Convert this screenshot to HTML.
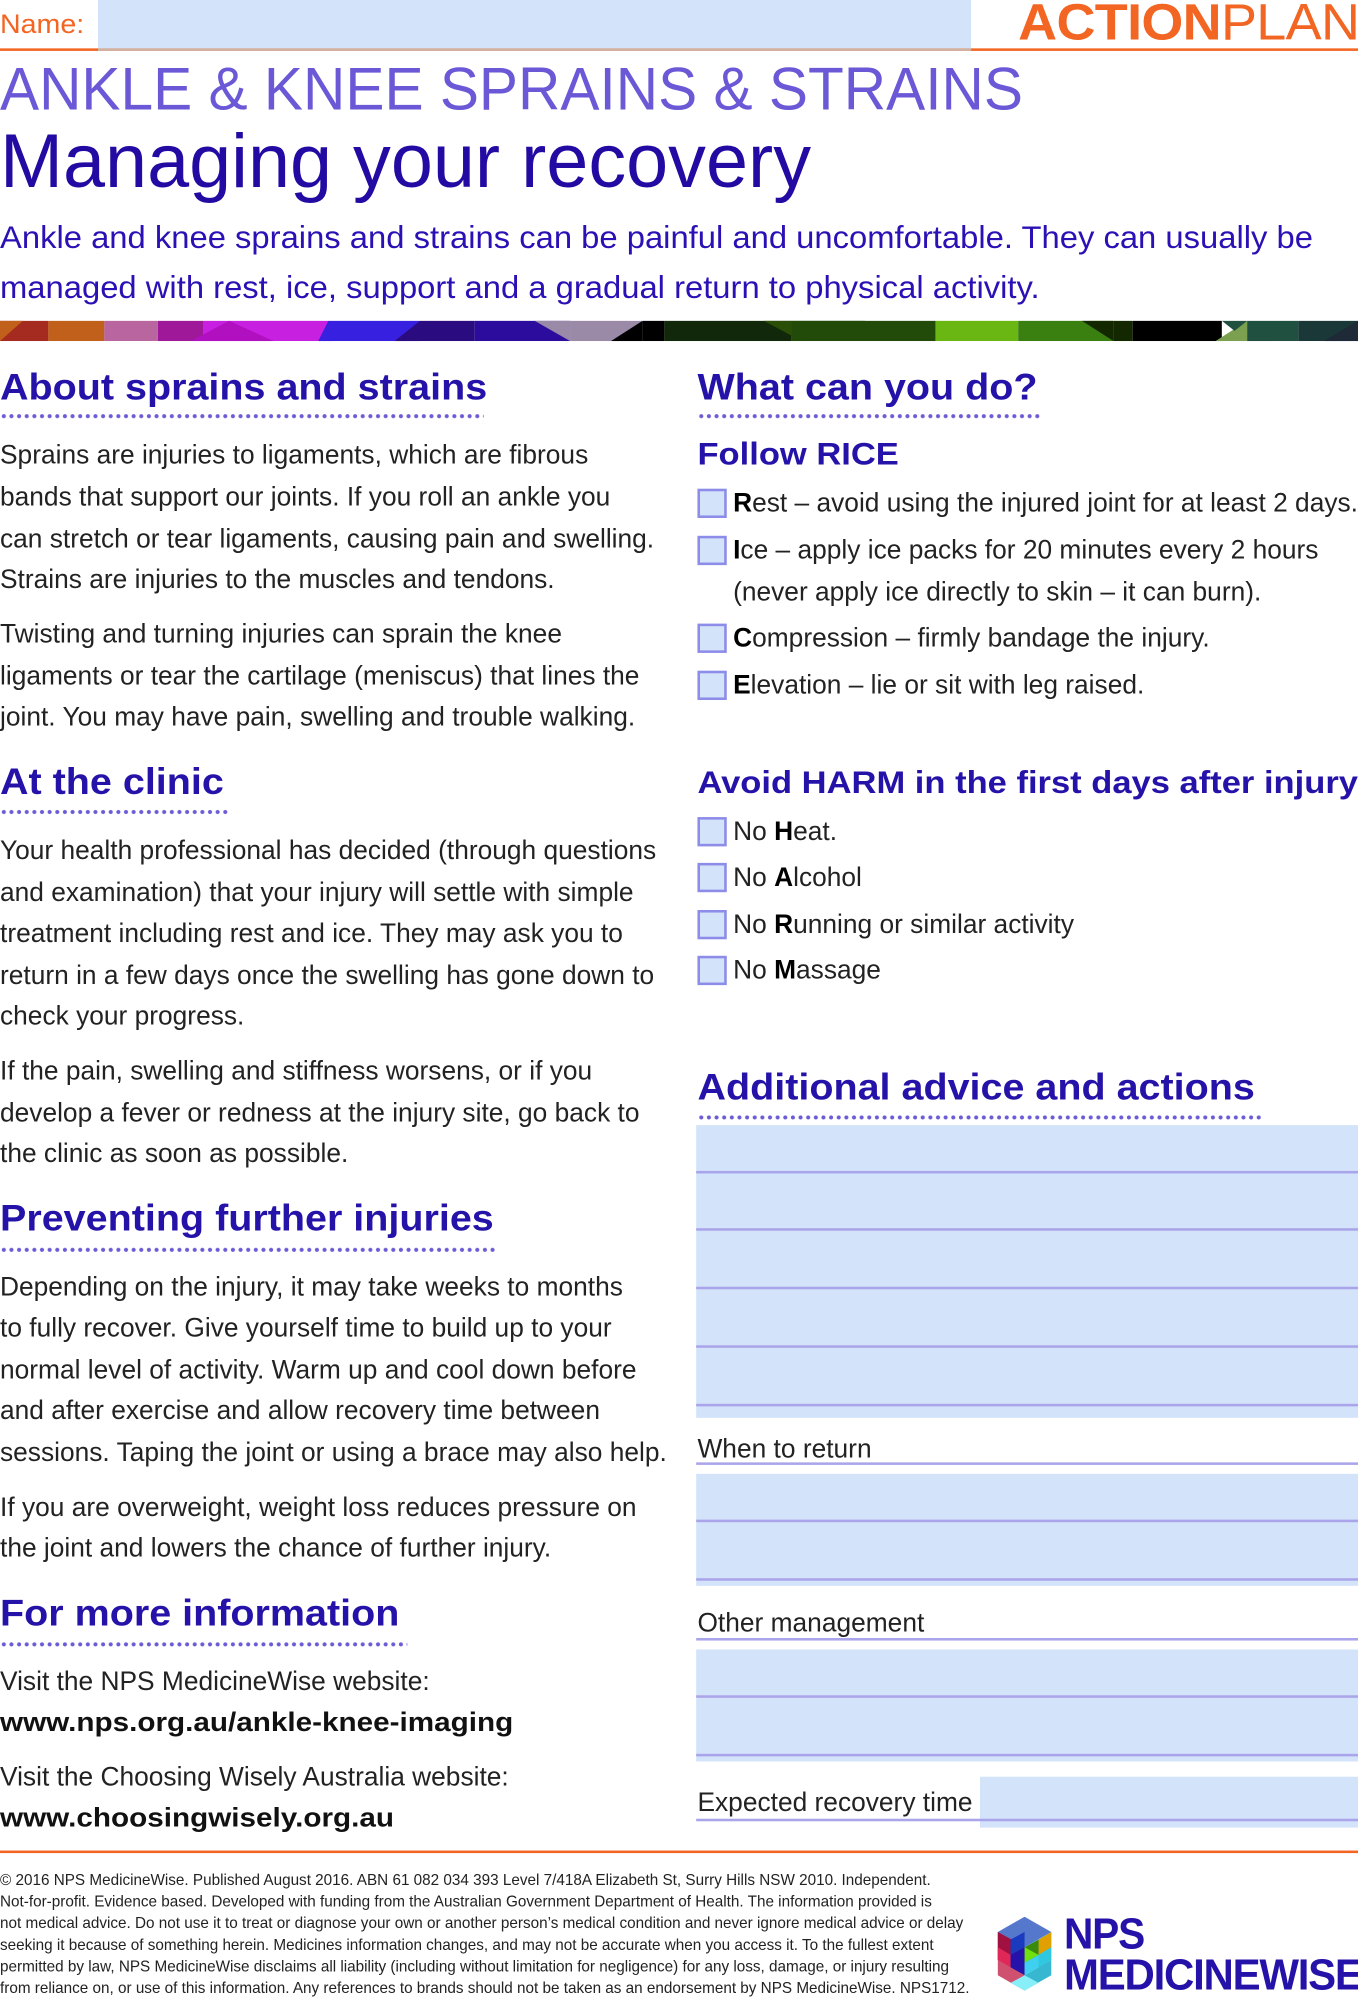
<!DOCTYPE html>
<html><head><meta charset="utf-8">
<style>
html,body{margin:0;padding:0;background:#fff;}
body{width:1358px;height:1996px;overflow:hidden;position:relative;}
#pg{position:absolute;left:0;top:0;width:1067px;height:1568px;transform:scale(1.27273);transform-origin:0 0;font-family:"Liberation Sans",Arial,sans-serif;}
.a{position:absolute;white-space:nowrap;}
.b{font-size:21px;line-height:33px;height:33px;color:#222;transform:scaleX(0.985);transform-origin:0 50%;}
.h{font-size:29px;font-weight:bold;color:#2512a8;line-height:34px;transform:scaleX(1.07);transform-origin:0 50%;}
.h2{font-size:25px;font-weight:bold;color:#2512a8;line-height:30px;transform:scaleX(1.085);transform-origin:0 50%;}
.dot{position:absolute;height:4px;background:radial-gradient(circle,#6b5bd6 1.4px,transparent 1.8px) 0 0/6px 4px repeat-x;}
.cb{position:absolute;left:548px;width:19px;height:19px;background:#d3e3fa;border:2px solid #8d8ce8;}
.fill{position:absolute;left:547px;width:520px;background:#d3e3fa;}
.ln{position:absolute;left:547px;width:520px;height:2px;background:#aaa4ea;}
.f{font-size:12px;line-height:17px;color:#222;}
b{color:#000;}
</style></head><body><div id="pg">
<div class="a" style="left:0;top:8px;font-size:21px;color:#f26522;line-height:24px;transform:scaleX(1.07);transform-origin:0 50%;">Name:</div>
<div style="position:absolute;left:77px;top:0;width:686px;height:38px;background:#d3e3fa;"></div>
<div style="position:absolute;left:0;top:38px;width:1067px;height:2px;background:#f26522;"></div>
<div style="position:absolute;left:77px;top:38px;width:686px;height:2px;background:#cfb3a6;"></div>
<div class="a" style="left:800px;top:-2px;font-size:40px;line-height:40px;color:#f26522;transform:scaleX(1.06);transform-origin:0 50%;letter-spacing:-0.5px;"><span style="font-weight:bold">ACTION</span>PLAN</div>

<div class="a" style="left:0;top:45px;font-size:47px;line-height:50px;color:#6a58d6;transform:scaleX(0.98);transform-origin:0 50%;">ANKLE &amp; KNEE SPRAINS &amp; STRAINS</div>
<div class="a" style="left:0;top:92px;font-size:60px;line-height:70px;color:#220aa2;transform:scaleX(0.99);transform-origin:0 50%;">Managing your recovery</div>
<div class="a" style="left:0;top:168px;font-size:25px;line-height:39px;color:#2a10b5;transform:scaleX(1.03);transform-origin:0 0;">Ankle and knee sprains and strains can be painful and uncomfortable. They can usually be<br>managed with rest, ice, support and a gradual return to physical activity.</div>

<svg style="position:absolute;left:0;top:252px" width="1067" height="16" viewBox="0 0 1067 16" preserveAspectRatio="none">
<rect x="0" y="0" width="38" height="16" fill="#a52a20"/><polygon points="0,16 0,0 18,0" fill="#c0601a"/>
<rect x="38" y="0" width="44" height="16" fill="#c0601a"/>
<rect x="82" y="0" width="42" height="16" fill="#b865a0"/>
<rect x="124" y="0" width="36" height="16" fill="#a0189a"/>
<rect x="160" y="0" width="98" height="16" fill="#c820e0"/><polygon points="150,16 180,0 215,16" fill="#b010c0"/>
<rect x="258" y="0" width="72" height="16" fill="#3820e0"/><polygon points="250,16 258,0 262,16" fill="#3820e0"/>
<rect x="330" y="0" width="43" height="16" fill="#2a0c80"/><polygon points="310,16 330,0 330,16" fill="#2a0c80"/>
<rect x="373" y="0" width="75" height="16" fill="#2c0c9c"/><polygon points="420,0 448,16 448,0" fill="#9a8aa8"/>
<rect x="448" y="0" width="57" height="16" fill="#9a8aa8"/><polygon points="480,16 505,0 505,16" fill="#000"/>
<rect x="505" y="0" width="17" height="16" fill="#000"/>
<rect x="522" y="0" width="100" height="16" fill="#12280a"/><polygon points="600,0 680,0 630,16" fill="#2a5008"/>
<rect x="622" y="0" width="113" height="16" fill="#224a08"/>
<rect x="735" y="0" width="65" height="16" fill="#6ab612"/>
<rect x="800" y="0" width="75" height="16" fill="#3a8010"/><polygon points="850,0 875,0 875,16" fill="#142800"/>
<rect x="875" y="0" width="15" height="16" fill="#142800"/>
<rect x="890" y="0" width="70" height="16" fill="#000"/><polygon points="955,16 980,0 1000,16" fill="#7aa050"/>
<rect x="980" y="0" width="40" height="16" fill="#1f5040"/><polygon points="960,0 980,0 970,8" fill="#1f5040"/>
<rect x="1020" y="0" width="47" height="16" fill="#1a3838"/><polygon points="1040,16 1067,0 1067,16" fill="#1f2a38"/>
</svg>

<div class="a h" style="left:0;top:288px;">About sprains and strains</div>
<div class="dot" style="left:0;top:325px;width:380px;"></div>
<div class="a b" style="left:0;top:341px;">Sprains are injuries to ligaments, which are fibrous</div>
<div class="a b" style="left:0;top:374px;">bands that support our joints. If you roll an ankle you</div>
<div class="a b" style="left:0;top:407px;">can stretch or tear ligaments, causing pain and swelling.</div>
<div class="a b" style="left:0;top:439px;">Strains are injuries to the muscles and tendons.</div>
<div class="a b" style="left:0;top:482px;">Twisting and turning injuries can sprain the knee</div>
<div class="a b" style="left:0;top:515px;">ligaments or tear the cartilage (meniscus) that lines the</div>
<div class="a b" style="left:0;top:547px;">joint. You may have pain, swelling and trouble walking.</div>

<div class="a h" style="left:0;top:598px;">At the clinic</div>
<div class="dot" style="left:0;top:636px;width:180px;"></div>
<div class="a b" style="left:0;top:652px;">Your health professional has decided (through questions</div>
<div class="a b" style="left:0;top:685px;">and examination) that your injury will settle with simple</div>
<div class="a b" style="left:0;top:717px;">treatment including rest and ice. They may ask you to</div>
<div class="a b" style="left:0;top:750px;">return in a few days once the swelling has gone down to</div>
<div class="a b" style="left:0;top:782px;">check your progress.</div>
<div class="a b" style="left:0;top:825px;">If the pain, swelling and stiffness worsens, or if you</div>
<div class="a b" style="left:0;top:858px;">develop a fever or redness at the injury site, go back to</div>
<div class="a b" style="left:0;top:890px;">the clinic as soon as possible.</div>

<div class="a h" style="left:0;top:941px;">Preventing further injuries</div>
<div class="dot" style="left:0;top:980px;width:390px;"></div>
<div class="a b" style="left:0;top:995px;">Depending on the injury, it may take weeks to months</div>
<div class="a b" style="left:0;top:1027px;">to fully recover. Give yourself time to build up to your</div>
<div class="a b" style="left:0;top:1060px;">normal level of activity. Warm up and cool down before</div>
<div class="a b" style="left:0;top:1092px;">and after exercise and allow recovery time between</div>
<div class="a b" style="left:0;top:1125px;">sessions. Taping the joint or using a brace may also help.</div>
<div class="a b" style="left:0;top:1168px;">If you are overweight, weight loss reduces pressure on</div>
<div class="a b" style="left:0;top:1200px;">the joint and lowers the chance of further injury.</div>

<div class="a h" style="left:0;top:1251px;">For more information</div>
<div class="dot" style="left:0;top:1290px;width:320px;"></div>
<div class="a b" style="left:0;top:1305px;">Visit the NPS MedicineWise website:</div>
<div class="a b" style="left:0;top:1337px;font-weight:bold;color:#111;transform:scaleX(1.11);">www.nps.org.au/ankle-knee-imaging</div>
<div class="a b" style="left:0;top:1380px;">Visit the Choosing Wisely Australia website:</div>
<div class="a b" style="left:0;top:1412px;font-weight:bold;color:#111;transform:scaleX(1.11);">www.choosingwisely.org.au</div>

<div class="a h" style="left:548px;top:288px;">What can you do?</div>
<div class="dot" style="left:548px;top:325px;width:270px;"></div>
<div class="a h2" style="left:548px;top:342px;">Follow RICE</div>
<div class="cb" style="top:384px;"></div><div class="a b" style="left:576px;top:379px;"><b>R</b>est – avoid using the injured joint for at least 2 days.</div>
<div class="cb" style="top:421px;"></div><div class="a b" style="left:576px;top:416px;"><b>I</b>ce – apply ice packs for 20 minutes every 2 hours</div>
<div class="a b" style="left:576px;top:449px;">(never apply ice directly to skin – it can burn).</div>
<div class="cb" style="top:490px;"></div><div class="a b" style="left:576px;top:485px;"><b>C</b>ompression – firmly bandage the injury.</div>
<div class="cb" style="top:527px;"></div><div class="a b" style="left:576px;top:522px;"><b>E</b>levation – lie or sit with leg raised.</div>

<div class="a h2" style="left:548px;top:600px;">Avoid HARM in the first days after injury</div>
<div class="cb" style="top:642px;"></div><div class="a b" style="left:576px;top:637px;">No <b>H</b>eat.</div>
<div class="cb" style="top:678px;"></div><div class="a b" style="left:576px;top:673px;">No <b>A</b>lcohol</div>
<div class="cb" style="top:715px;"></div><div class="a b" style="left:576px;top:710px;">No <b>R</b>unning or similar activity</div>
<div class="cb" style="top:751px;"></div><div class="a b" style="left:576px;top:746px;">No <b>M</b>assage</div>

<div class="a h" style="left:548px;top:838px;">Additional advice and actions</div>
<div class="dot" style="left:548px;top:876px;width:443px;"></div>
<div class="fill" style="top:884px;height:230px;"></div>
<div class="ln" style="top:920px;"></div><div class="ln" style="top:965px;"></div><div class="ln" style="top:1011px;"></div><div class="ln" style="top:1057px;"></div><div class="ln" style="top:1103px;"></div>
<div class="a b" style="left:548px;top:1122px;">When to return</div>
<div class="ln" style="top:1149px;"></div>
<div class="fill" style="top:1158px;height:88px;"></div>
<div class="ln" style="top:1194px;"></div><div class="ln" style="top:1240px;"></div>
<div class="a b" style="left:548px;top:1259px;">Other management</div>
<div class="ln" style="top:1287px;"></div>
<div class="fill" style="top:1296px;height:88px;"></div>
<div class="ln" style="top:1332px;"></div><div class="ln" style="top:1378px;"></div>
<div class="a b" style="left:548px;top:1400px;">Expected recovery time</div>
<div class="fill" style="left:770px;width:297px;top:1396px;height:40px;"></div>
<div class="ln" style="top:1429px;"></div>

<div style="position:absolute;left:0;top:1454px;width:1067px;height:2px;background:#f26522;"></div>
<div class="a f" style="left:0;top:1469px;transform:scaleX(1.0);transform-origin:0 0;">© 2016 NPS MedicineWise. Published August 2016. ABN 61 082 034 393 Level 7/418A Elizabeth St, Surry Hills NSW 2010. Independent.<br>Not-for-profit. Evidence based. Developed with funding from the Australian Government Department of Health. The information provided is<br>not medical advice. Do not use it to treat or diagnose your own or another person’s medical condition and never ignore medical advice or delay<br>seeking it because of something herein. Medicines information changes, and may not be accurate when you access it. To the fullest extent<br>permitted by law, NPS MedicineWise disclaims all liability (including without limitation for negligence) for any loss, damage, or injury resulting<br>from reliance on, or use of this information. Any references to brands should not be taken as an endorsement by NPS MedicineWise. NPS1712.</div>

<svg style="position:absolute;left:780px;top:1506px" width="50" height="58" viewBox="0 0 50 58">
<polygon points="25,0 46,12 25,24 4,12" fill="#5577cc"/>
<polygon points="4,12 25,24 25,46 4,34" fill="#c0184c"/>
<polygon points="4,12 15,18 15,40 4,34" fill="#a01040"/>
<polygon points="25,24 46,12 46,34 25,46" fill="#3fd0f0"/>
<polygon points="36,18 46,12 46,24 36,30" fill="#e0a000"/>
<polygon points="25,24 36,18 36,30 25,36" fill="#3a8a10"/>
<polygon points="36,30 46,24 46,34 36,40" fill="#30c8e0"/>
<polygon points="25,36 36,30 25,24" fill="#70e010"/>
<polygon points="14,18 25,12 25,24 14,30" fill="#1a3ac0"/>
<polygon points="14,30 25,24 25,46 14,40" fill="#2512a8"/>
<polygon points="4,24 14,30 14,40 4,34" fill="#e02858"/>
<polygon points="4,34 25,46 25,58 4,46" fill="#d05070"/>
<polygon points="25,46 46,34 46,46 25,58" fill="#38b8d0"/>
<polygon points="14,52 25,46 36,52 25,58" fill="#88eef8"/>
</svg>
<div class="a" style="left:836px;top:1503px;font-size:34px;font-weight:bold;color:#2512a8;line-height:34px;transform:scaleX(0.94);transform-origin:0 50%;letter-spacing:-1px;">NPS</div>
<div class="a" style="left:836px;top:1535px;font-size:34px;font-weight:bold;color:#2512a8;line-height:34px;transform:scaleX(0.97);transform-origin:0 50%;letter-spacing:-1px;">MEDICINEWISE</div>
</div></body></html>
